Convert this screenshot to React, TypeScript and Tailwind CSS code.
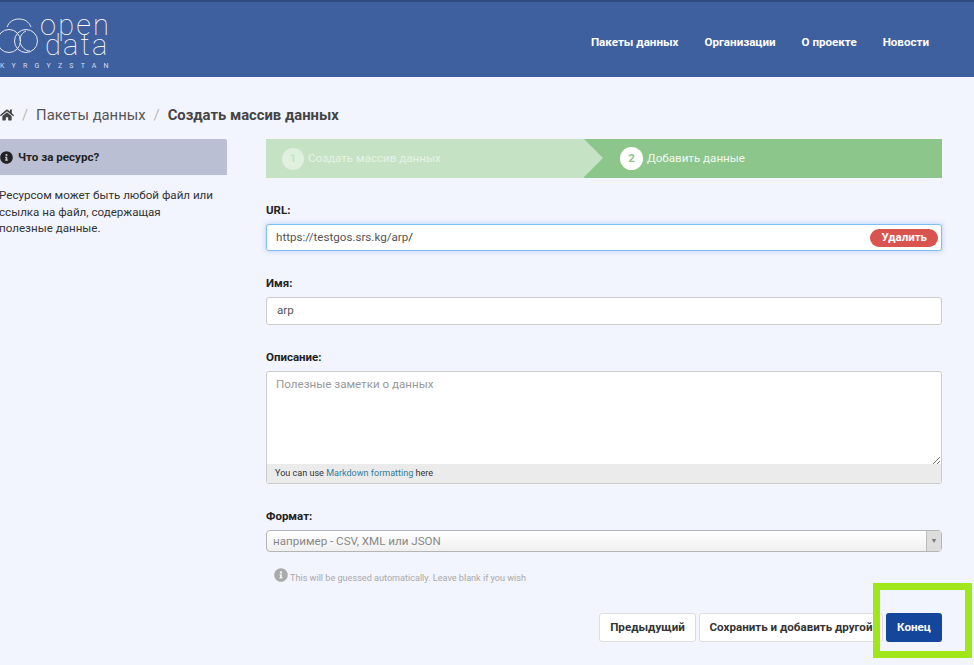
import { FaHome, FaInfoCircle } from "react-icons/fa"

const navItems = ["Пакеты данных", "Организации", "О проекте", "Новости"]

function Logo() {
  return (
    <div className="relative h-[75px] w-[130px] shrink-0 text-white">
      <svg className="absolute left-0 top-[15px]" width="40" height="40" viewBox="0 0 40 40" fill="none" stroke="#e4e9f4" strokeWidth="1">
        <path d="M7 10C9 5 13 2 19 2s10 3 12 8" />
        <circle cx="9" cy="24" r="11.500" />
        <circle cx="26" cy="24" r="11.500" />
        <path d="M20 24c0-5 2-8 6-10M30 34c-5 0-8-4-10-8" />
      </svg>
      <div className="absolute left-[40px] top-[13px] text-[29px] font-thin leading-[20px] tracking-[2.200px]">
        <div>open</div>
        <div className="ml-[5px]">data</div>
      </div>
      <div className="absolute left-0 top-[60px] whitespace-nowrap text-[7px] leading-[9px] tracking-[7.200px] text-[#d5dcec]">KYRGYZSTAN</div>
    </div>
  )
}

function Field({ label, children, className }: { label: string; children: React.ReactNode; className: string }) {
  return (
    <div className={className}>
      <div className="mb-[6px] text-[11.500px] font-bold leading-[15px] text-[#222]">{label}</div>
      {children}
    </div>
  )
}

export default function App() {
  return (
    <div className="relative h-[665px] w-[974px] overflow-hidden bg-[#f2f4fe] font-['Roboto',sans-serif] text-[#444]">
      <header className="flex h-[77px] items-center justify-between border-t-2 border-[#2f4a80] bg-[#3f609e] pr-[45px]">
        <Logo />
        <nav className="mt-[6px] flex gap-[26px] text-[11.600px] font-bold text-white">
          {navItems.map((item) => (
            <a key={item}>{item}</a>
          ))}
        </nav>
      </header>

      <div className="mt-[28px] flex h-[20px] items-center text-[14.800px]">
        <FaHome className="text-[14px] text-[#444]" />
        <span className="mx-[8px] text-[#bbb]">/</span>
        <span className="text-[#555]">Пакеты данных</span>
        <span className="mx-[8px] text-[#bbb]">/</span>
        <span className="font-bold text-[#444]">Создать массив данных</span>
      </div>

      <div className="mt-[14px] flex">
        <aside className="w-[227px] shrink-0">
          <div className="flex h-[36px] items-center gap-[5px] rounded-tr-[2px] bg-[#babfd4] pt-[2px] text-[11.600px] font-bold text-[#222]">
            <FaInfoCircle className="mb-[2px] text-[13px]" />
            Что за ресурс?
          </div>
          <p className="mt-[12px] ml-[-1px] text-[11.600px] leading-[16.500px] text-[#333]">
            Ресурсом может быть любой файл или
            <br />
            ссылка на файл, содержащая
            <br />
            полезные данные.
          </p>
        </aside>

        <main className="ml-[39px] w-[676px]">
          <div className="flex h-[39px] bg-[#8cc68a] text-[11.600px]">
            <div className="relative flex w-[318px] items-center bg-[#c6e2c5] pl-[16px] text-[#e4f2e4]">
              <span className="mr-[4px] flex h-[22px] w-[22px] items-center justify-center rounded-full bg-[#e0f0df] text-[11.500px] font-bold text-[#c6e2c5]">1</span>
              Создать массив данных
              <span className="absolute left-full top-0 border-y-[19.500px] border-l-[19px] border-y-transparent border-l-[#c6e2c5]" />
            </div>
            <div className="flex items-center pl-[36px] text-[#f2f9f1]">
              <span className="mr-[4px] flex h-[23px] w-[23px] items-center justify-center rounded-full bg-white text-[11.500px] font-bold text-[#8cc68a]">2</span>
              Добавить данные
            </div>
          </div>

          <Field label="URL:" className="mt-[25px]">
            <div className="flex h-[27px] items-center justify-between rounded-[3px] border border-[#80bdf0] bg-white pl-[9px] pr-[3px] text-[11.600px] text-[#555] shadow-[0_0_5px_rgba(100,170,240,0.5)]">
              <span>
                https://testgos.srs.kg/arp<span className="text-[#222]">/</span>
              </span>
              <span className="flex h-[18px] items-center rounded-full bg-[#d9534f] px-[11px] text-[11.500px] font-bold text-white">Удалить</span>
            </div>
          </Field>

          <Field label="Имя:" className="mt-[25px]">
            <div className="flex h-[28px] items-center rounded-[3px] border border-[#ccc] bg-white pl-[10px] text-[11.600px] text-[#555]">arp</div>
          </Field>

          <Field label="Описание:" className="mt-[25px]">
            <div className="relative overflow-hidden rounded-[3px] border border-[#ccc] bg-white">
              <div className="h-[92px] pl-[9px] pt-[4px] text-[11.600px] text-[#999]">Полезные заметки о данных</div>
              <svg className="absolute bottom-[19px] right-[1px]" width="8" height="8" viewBox="0 0 8 8" stroke="#777" strokeWidth="1">
                <path d="M1 8 8 1M5 8l3-3" />
              </svg>
              <div className="flex h-[19px] items-center bg-[#ebebeb] pl-[8px] text-[9.050px] text-[#333]">
                You can use&nbsp;<span className="text-[#2f7f9f]">Markdown formatting</span>&nbsp;here
              </div>
            </div>
          </Field>

          <Field label="Формат:" className="mt-[25px]">
            <div className="flex h-[22px] items-center justify-between rounded-[4px] border border-[#b5b5b5] bg-gradient-to-b from-white to-[#f0f0f0] text-[11.600px] text-[#888]">
              <span className="pl-[6px] pt-[1px]">например - CSV, XML или JSON</span>
              <span className="flex h-full w-[15px] items-center justify-center border-l border-[#bbb] bg-[#ddd] text-[7px] text-[#777]">▼</span>
            </div>
          </Field>

          <div className="ml-[8px] mt-[15px] flex h-[18px] items-end gap-[2px] text-[9.100px] leading-[13px] text-[#aaa]">
            <FaInfoCircle className="mb-[3px] text-[14px] text-[#aaa]" />
            This will be guessed automatically. Leave blank if you wish
          </div>

          <div className="mt-[28px] flex justify-end gap-[3px] text-[11.600px] font-bold">
            <button className="h-[29px] w-[97px] rounded-[3px] border border-[#ddd] bg-white text-[#333]">Предыдущий</button>
            <button className="h-[29px] w-[184px] rounded-[3px] border border-[#ddd] bg-white text-[#333]">Сохранить и добавить другой</button>
            <button className="h-[29px] w-[56px] rounded-[3px] bg-[#14479c] text-white">Конец</button>
          </div>
        </main>
      </div>

      {/* green marker drawn over the finish button */}
      <div className="absolute left-[873px] top-[583px] h-[75px] w-[99px] border-[7px] border-[#9fe61a]" />
    </div>
  )
}
